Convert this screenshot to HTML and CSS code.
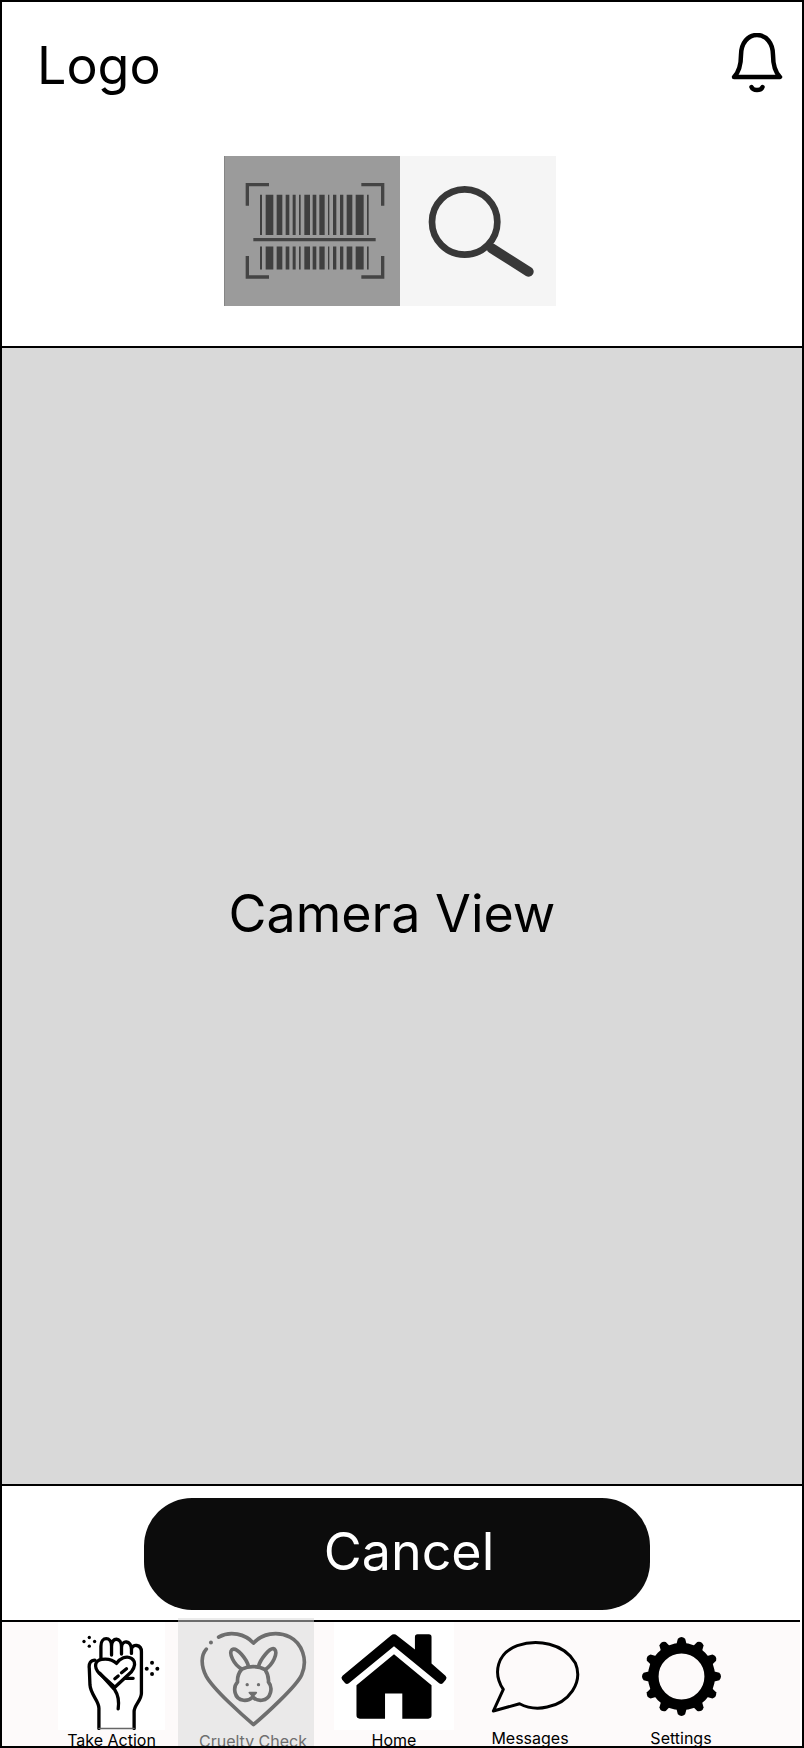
FILE: index.html
```html
<!DOCTYPE html>
<html lang="en">
  <head>
    <meta charset="utf-8" />
    <title>Cruelty Check Scanner</title>
    <link rel="stylesheet" href="styles.css">
  </head>
  <body>
    <div class="page">
      <!-- Header -->
      <header class="header">
        <div class="topbar">
          <div class="logo">Logo</div>
          <svg class="bell" viewBox="0 0 52 60" fill="none" stroke="#000" stroke-width="4.500" stroke-linejoin="round" stroke-linecap="round">
            <path d="M3 44C9 38 10 30 10 22C10 10 17 2 26 2C35 2 42 10 42 22C42 30 43 38 49 44Z" />
            <path d="M20.500 54C22 58 30 58 31.500 54" />
          </svg>
        </div>
        <div class="mode-switch">
          <div class="mode mode-barcode">
            <svg viewBox="0 0 528 450" fill="none" stroke="#444" stroke-width="10">
              <path d="M70 149V86H135M412 86H476V149M70 300V363H135M412 363H476V300" />
              <path d="M88 251H455" />
              <g id="bars" fill="#3f3f3f" stroke="none">
                <path d="M108 116h6v121h-6zM125 116h23v121h-23zM158 116h17v121h-17zM185 116h11v121h-11zM206 116h9v121h-9zM225 116h5v121h-5zM241 116h17v121h-17zM266 116h11v121h-11zM286 116h16v121h-16zM312 116h4v121h-4zM327 116h10v121h-10zM348 116h10v121h-10zM368 116h17v121h-17zM395 116h24v121h-24zM429 116h5v121h-5z" />
              </g>
              <use href="#bars" transform="translate(0 205.500) scale(1 .57)" />
            </svg>
          </div>
          <div class="mode mode-search">
            <svg viewBox="0 0 468 450" fill="none" stroke="#383838" stroke-linecap="round">
              <circle cx="194" cy="198" r="98" stroke-width="20" />
              <path d="M275 277L386 347" stroke-width="30" />
            </svg>
          </div>
        </div>
      </header>

      <!-- Camera -->
      <main class="camera">Camera View</main>

      <div class="actions">
        <button class="btn-cancel">Cancel</button>
      </div>

      <!-- Bottom navigation -->
      <nav class="nav">
        <a class="tab tab-action" href="#">
          <svg viewBox="240 60 250 300" fill="none" stroke="#000" stroke-width="10" stroke-linecap="round" stroke-linejoin="round">
            <path d="M303 145V108C303 78 335 78 335 108V135M335 108C335 80 365 80 365 110V132M365 112C365 88 395 90 395 118V130M395 118C397 100 425 102 425 125V250C425 272 403 285 403 305V356M285 150C272 150 266 160 268 175L270 225C272 255 297 272 297 295V356" />
            <path d="M297 356H403" stroke="#666" stroke-width="4" />
            <path d="M350 160C360 145 380 135 395 145C410 155 405 172 395 185L345 232L298 190C280 170 285 152 305 148C325 145 340 150 350 160Z" />
            <path d="M300 190L345 240C355 255 358 275 355 297M375 205H400M345 206L355 198M365 188L380 176" />
            <g fill="#000" stroke="none">
              <circle cx="268" cy="82" r="5" /><circle cx="252" cy="94" r="5" /><circle cx="284" cy="94" r="5" /><circle cx="268" cy="108" r="5" />
              <circle cx="457" cy="158" r="6" /><circle cx="441" cy="176" r="6" /><circle cx="473" cy="176" r="6" /><circle cx="457" cy="192" r="6" />
            </g>
          </svg>
          <span class="tab-label">Take Action</span>
        </a>
        <a class="tab tab-cruelty" href="#">
          <svg viewBox="590 55 340 300" fill="none" stroke="#6e6e6e" stroke-width="11" stroke-linecap="round" stroke-linejoin="round">
            <path d="M655 82C690 62 735 72 760 100C785 72 830 62 870 82C905 100 925 150 905 195C890 230 790 320 760 345C730 320 640 240 618 200C600 165 603 135 618 118" />
            <circle cx="632" cy="98" r="6" fill="#6e6e6e" stroke="none" />
            <path d="M725 178C700 165 685 130 695 120C710 110 740 150 745 170M775 170C780 150 810 110 823 118C835 130 818 165 795 180" />
            <path d="M725 178C745 168 775 168 795 180C803 192 806 205 805 217C818 232 815 268 785 272C775 273 765 270 758 262C750 270 740 273 730 272C700 268 698 232 712 217C711 205 715 190 725 178Z" />
            <path d="M748 249H768L758 260Z" fill="#6e6e6e" stroke-width="6" />
            <g fill="#6e6e6e" stroke="none"><circle cx="741" cy="225" r="5" /><circle cx="775" cy="225" r="5" /></g>
          </svg>
          <span class="tab-label">Cruelty Check</span>
        </a>
        <a class="tab tab-home" href="#">
          <svg viewBox="60 65 330 265" fill="#000">
            <path d="M215 76Q225 68 235 76L288 118V80Q288 72 296 72H330Q338 72 338 80V160L380 197Q386 203 381 209L372 219Q367 224 361 219L225 108L89 219Q83 224 78 219L69 209Q64 203 70 197Z" />
            <path d="M112 225L225 132L338 225V316Q338 326 328 326H250V250H198V326H122Q112 326 112 316Z" />
          </svg>
          <span class="tab-label">Home</span>
        </a>
        <a class="tab tab-messages" href="#">
          <svg viewBox="505 85 280 235" fill="none" stroke="#000" stroke-width="9" stroke-linejoin="round">
            <path d="M518 305L548 240C515 190 530 130 590 108C650 88 730 100 765 160C790 220 745 280 680 293C650 300 620 295 597 283Z" />
          </svg>
          <span class="tab-label">Messages</span>
        </a>
        <a class="tab tab-settings" href="#">
          <svg viewBox="955 72 256 256">
            <circle cx="1083" cy="200" r="85" fill="none" stroke="#000" stroke-width="32" />
            <path id="tooth" d="M1066 110L1072 86Q1083 76 1094 86L1100 110Z" />
            <use href="#tooth" transform="rotate(30 1083 200)" />
            <use href="#tooth" transform="rotate(60 1083 200)" />
            <use href="#tooth" transform="rotate(90 1083 200)" />
            <use href="#tooth" transform="rotate(120 1083 200)" />
            <use href="#tooth" transform="rotate(150 1083 200)" />
            <use href="#tooth" transform="rotate(180 1083 200)" />
            <use href="#tooth" transform="rotate(210 1083 200)" />
            <use href="#tooth" transform="rotate(240 1083 200)" />
            <use href="#tooth" transform="rotate(270 1083 200)" />
            <use href="#tooth" transform="rotate(300 1083 200)" />
            <use href="#tooth" transform="rotate(330 1083 200)" />
          </svg>
          <span class="tab-label">Settings</span>
        </a>
      </nav>
    </div>
  </body>
</html>
```

FILE: styles.css
```css
* {
  margin: 0;
  padding: 0;
  box-sizing: border-box;
}

body {
  font-family: 'Inter', 'Liberation Sans', sans-serif;
  color: #000;
  background: #fff;
}

.page {
  display: flex;
  flex-direction: column;
  width: 804px;
  height: 1748px;
  border: 2px solid #000;
  overflow: hidden;
}

.header {
  height: 346px;
  border-bottom: 2px solid #000;
}

.topbar {
  display: flex;
  justify-content: space-between;
  align-items: flex-start;
  height: 154px;
  padding: 31px 19px 0 35px;
}

.logo {
  margin-top: 3px;
  font-size: 52px;
  line-height: 60px;
}

.bell {
  width: 52px;
  height: 60px;
}

.mode-switch {
  display: flex;
  margin-left: 222px;
}

.mode {
  height: 150px;
}

.mode svg {
  display: block;
  height: 150px;
}

.mode-barcode {
  width: 176px;
  background: #9b9b9b;
  box-shadow: inset 1px 0 0 #858585;
}

.mode-search {
  width: 156px;
  background: #f5f5f5;
}

.camera {
  display: flex;
  justify-content: center;
  align-items: center;
  height: 1138px;
  padding-right: 20px;
  padding-bottom: 6px;
  background: #d9d9d9;
  border-bottom: 2px solid #000;
  font-size: 52px;
}

.actions {
  display: flex;
  height: 134px;
  padding: 12px 0 0 142px;
}

.btn-cancel {
  width: 506px;
  height: 112px;
  padding-left: 24px;
  padding-bottom: 6px;
  background: #0c0c0c;
  color: #fff;
  border: none;
  border-radius: 48px;
  font-family: inherit;
  font-size: 52px;
}

.nav {
  display: flex;
  align-items: flex-start;
  height: 126px;
  margin-right: 2px;
  padding-left: 56px;
  background: #fdfafa;
  border-top: 2px solid #000;
}

.tab {
  display: flex;
  flex-direction: column;
  align-items: center;
  flex: none;
  height: 124px;
  overflow: hidden;
  color: #000;
  text-decoration: none;
}

.tab svg {
  display: block;
  flex: none;
}

.tab-label {
  font-size: 16px;
  line-height: 20px;
  white-space: nowrap;
}

.tab-action {
  width: 107px;
  padding-top: 8px;
  background: linear-gradient(#fff, #fff) top / 100% 108px no-repeat;
}

.tab-action svg {
  width: 83px;
  height: 100px;
  margin-left: 20px;
}

.tab-cruelty {
  width: 136px;
  height: 128px;
  margin: -4px 0 0 13px;
  padding: 10px 0 0 14px;
  background: rgba(215, 215, 215, 0.5);
  color: #6e6e6e;
}

.tab-cruelty svg {
  width: 113px;
  height: 100px;
  margin-bottom: 3px;
}

.tab-home {
  width: 120px;
  margin-left: 20px;
  padding-top: 10px;
  background: linear-gradient(#fff, #fff) top / 100% 108px no-repeat;
}

.tab-home svg {
  width: 110px;
  height: 88px;
  margin-bottom: 10px;
}

.tab-messages {
  width: 120px;
  margin-left: 16px;
  padding-top: 16px;
}

.tab-messages svg {
  width: 93px;
  height: 78px;
  margin: 0 0 12px 10px;
}

.tab-settings {
  width: 122px;
  margin-left: 30px;
  padding-top: 12px;
}

.tab-settings svg {
  width: 85px;
  height: 85px;
  margin-bottom: 9px;
}
```
